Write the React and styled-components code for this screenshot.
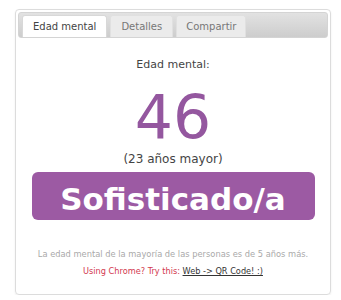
import React from "react";
import styled, { createGlobalStyle } from "styled-components";

const Global = createGlobalStyle`
  html, body { margin: 0; padding: 0; background: #fff; }
  body { font-family: "DejaVu Sans", Verdana, sans-serif; }
`;

const Card = styled.div`
  box-sizing: border-box;
  margin: 9px 0 0 15px;
  width: 316px;
  height: 286px;
  border: 1px solid #dcdcdc;
  border-radius: 4px;
  padding: 2px;
  box-shadow: 0 1px 2px rgba(0, 0, 0, 0.08);
  display: flex;
  flex-direction: column;
`;

const TabBar = styled.div`
  box-sizing: border-box;
  height: 26px;
  display: flex;
  align-items: flex-end;
  gap: 3px;
  padding: 0 0 0 3px;
  border-radius: 3px;
  background: linear-gradient(#e2e2e2, #cdcdcd);
  border: 1px solid #d4d4d4;
`;

const Tab = styled.div`
  box-sizing: border-box;
  height: 22px;
  padding: 0 ${(p) => p.$pad}px;
  display: flex;
  align-items: center;
  font-size: 10px;
  color: ${(p) => (p.$active ? "#444" : "#777")};
  background: ${(p) => (p.$active ? "#fff" : "#ebebeb")};
  border-radius: 3px 3px 0 0;
  border: 1px solid ${(p) => (p.$active ? "#d8d8d8" : "#e0e0e0")};
  border-bottom: none;
`;

const Body = styled.div`
  display: flex;
  flex-direction: column;
  align-items: center;
  color: #555;
`;

const Label = styled.div`
  margin-top: 20px;
  font-size: 11px;
  line-height: 13px;
  color: #444;
`;

const Age = styled.div`
  margin-top: 20px;
  font-size: 60px;
  line-height: 52px;
  color: #94579f;
`;

const Diff = styled.div`
  margin-top: 9px;
  font-size: 12px;
  line-height: 14px;
  color: #444;
`;

const Badge = styled.div`
  box-sizing: border-box;
  margin-top: 6px;
  width: 283px;
  height: 48px;
  padding-top: 6px;
  line-height: 42px;
  border-radius: 6px;
  background: #9c5aa3;
  color: #fff;
  font-weight: bold;
  font-size: 31px;
  text-align: center;
`;

const Note = styled.div`
  margin-top: 29px;
  font-size: 8.3px;
  line-height: 10px;
  color: #a9a9a9;
`;

const Promo = styled.div`
  margin-top: 7px;
  font-size: 8.2px;
  line-height: 10px;
  color: #d2394f;
`;

const PromoLink = styled.a`
  color: #333;
  text-decoration: underline;
`;

export default function App() {
  return (
    <>
      <Global />
      <Card>
        <TabBar>
          <Tab $active $pad={10}>Edad mental</Tab>
          <Tab $pad={10}>Detalles</Tab>
          <Tab $pad={9}>Compartir</Tab>
        </TabBar>
        <Body>
          <Label>Edad mental:</Label>
          <Age>46</Age>
          <Diff>(23 años mayor)</Diff>
          <Badge>Sofisticado/a</Badge>
          <Note>La edad mental de la mayoría de las personas es de 5 años más.</Note>
          <Promo>
            Using Chrome? Try this: <PromoLink href="#">Web -&gt; QR Code! :)</PromoLink>
          </Promo>
        </Body>
      </Card>
    </>
  );
}
